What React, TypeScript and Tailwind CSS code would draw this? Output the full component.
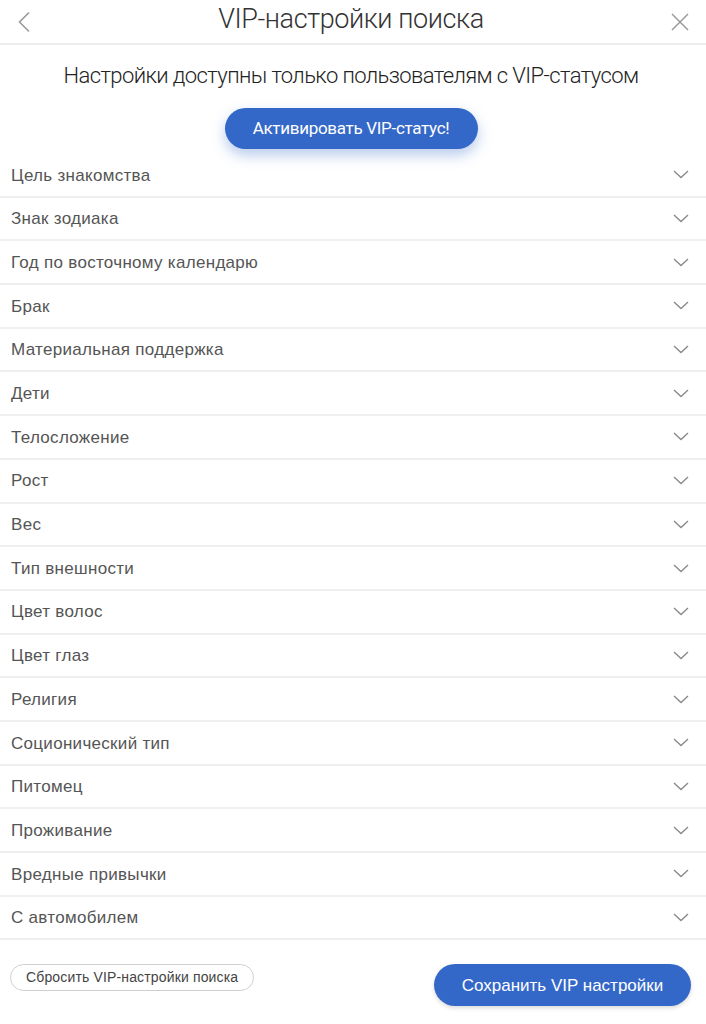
const FILTERS = [
  "Цель знакомства",
  "Знак зодиака",
  "Год по восточному календарю",
  "Брак",
  "Материальная поддержка",
  "Дети",
  "Телосложение",
  "Рост",
  "Вес",
  "Тип внешности",
  "Цвет волос",
  "Цвет глаз",
  "Религия",
  "Соционический тип",
  "Питомец",
  "Проживание",
  "Вредные привычки",
  "С автомобилем",
];

const Chevron = () => (
  <svg width="16" height="9" viewBox="0 0 16 9" fill="none">
    <path d="M1 1l7 6.5L15 1" stroke="#8a8a8a" strokeWidth="1.4" />
  </svg>
);

export default function App() {
  return (
    <div className="w-[706px] h-[1024px] bg-white [font-family:'Liberation_Sans',Arial,sans-serif] flex flex-col">
      <div className="h-[45px] flex items-center justify-between px-[17px] border-b-2 border-[#ececec]">
        <svg width="14" height="22" viewBox="0 0 14 22" fill="none">
          <path d="M12 1.5L2.5 11l9.5 9.5" stroke="#9a9a9a" strokeWidth="1.6" />
        </svg>
        <h1 className="[font-family:Roboto,sans-serif] font-light text-[27px] tracking-[-0.4px] text-[#333] -mt-[4px]">
          VIP-настройки поиска
        </h1>
        <svg width="18" height="18" viewBox="0 0 18 18" fill="none">
          <path d="M1 1l16 16M17 1L1 17" stroke="#9a9a9a" strokeWidth="1.5" />
        </svg>
      </div>

      <div className="flex flex-col items-center pt-[14px] pb-[5px] pr-[4px]">
        <p className="[font-family:Roboto,sans-serif] font-light text-[22px] tracking-[-0.6px] text-[#222]">
          Настройки доступны только пользователям с VIP-статусом
        </p>
        <button className="mt-[16px] w-[253px] h-[41px] rounded-full bg-[#3468c8] text-white [font-family:Roboto,sans-serif] text-[17px] tracking-[-0.3px] shadow-[0_6px_14px_rgba(52,104,200,0.35)]">
          Активировать VIP-статус!
        </button>
      </div>

      <div className="flex flex-col">
        {FILTERS.map((f) => (
          <div
            key={f}
            className="h-[43.7px] flex items-center justify-between pl-[11px] pr-[17px] border-b-2 border-[#efefef] text-[17px] tracking-[0.3px] text-[#555]"
          >
            <span className="pt-[1px]">{f}</span>
            <Chevron />
          </div>
        ))}
      </div>

      <div className="flex justify-between px-[10px] pt-[24px]">
        <button className="self-start h-[27px] px-[15px] rounded-full border border-[#cfcfcf] text-[14px] tracking-[0.15px] text-[#444] bg-white">
          Сбросить VIP-настройки поиска
        </button>
        <button className="mr-[5px] w-[257px] h-[42px] rounded-full bg-[#3468c8] text-white text-[17px] shadow-[0_2px_4px_rgba(0,0,0,0.15)]">
          Сохранить VIP настройки
        </button>
      </div>
    </div>
  );
}
